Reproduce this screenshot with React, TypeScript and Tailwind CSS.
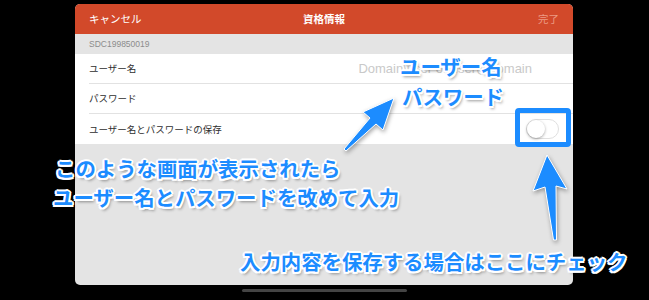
import React from 'react';

const jp = 'font-["Noto_Sans_CJK_JP","Noto_Sans",sans-serif]';

// blue callout text with white outline + soft shadow
const callout =
  'absolute whitespace-nowrap font-bold text-[20.4px] leading-none text-[#1c8cff] [text-shadow:-1.5px_-1.5px_0_#fff,1.5px_-1.5px_0_#fff,-1.5px_1.5px_0_#fff,1.5px_1.5px_0_#fff,0_2px_0_#fff,0_-2px_0_#fff,2px_0_0_#fff,-2px_0_0_#fff,2px_3px_3px_rgba(0,0,0,0.4)]';

const Row: React.FC<{ label: string; last?: boolean; children?: React.ReactNode }> = ({ label, last, children }) => (
  <div className="bg-white pl-[14px]">
    <div className={`flex h-[30px] items-center justify-between pr-[14px] ${last ? '' : 'border-b border-[#e2e2e2]'}`}>
      <span className="text-[9.5px] text-[#2e2e2e]">{label}</span>
      {children}
    </div>
  </div>
);

const App: React.FC = () => {
  return (
    <div className={`relative h-[300px] w-[649px] overflow-hidden bg-black ${jp}`}>
      {/* sheet */}
      <div className="ml-[75px] pt-[4px]">
        <div className="flex h-[281px] w-[498px] flex-col overflow-hidden rounded-[5px] bg-[#e4e4e4]">
          <div className="flex h-[30px] items-center justify-between bg-[#d2492a] px-[14px]">
            <span className="w-[60px] text-[10.5px] text-white">キャンセル</span>
            <span className="text-[10.5px] font-bold text-white">資格情報</span>
            <span className="w-[60px] text-right text-[10.5px] text-[#ec9a84]">完了</span>
          </div>
          <div className="flex h-[20px] items-center px-[14px]">
            <span className='font-["Liberation_Sans",sans-serif] text-[8.5px] text-[#8c8c8c]'>SDC199850019</span>
          </div>
          <Row label="ユーザー名">
            <span className='mr-[27px] font-["Liberation_Sans",sans-serif] text-[13px] text-[#c9c9c9]'>Domain\user or user@domain</span>
          </Row>
          <Row label="パスワード" />
          <Row label="ユーザー名とパスワードの保存" last>
            <div className="flex h-[20px] w-[33px] items-center rounded-full border border-[#e0e0e0] bg-white">
              <div className="h-[18px] w-[18px] rounded-full bg-white shadow-[0_1px_3px_rgba(0,0,0,0.35)]" />
            </div>
          </Row>
        </div>
      </div>

      {/* home indicator */}
      <div className="absolute left-[242px] top-[289px] h-[3px] w-[165px] rounded-full bg-[#444]" />

      {/* highlight around the switch */}
      <div className="absolute left-[515px] top-[108px] h-[39px] w-[56px] rounded-[4px] border-[5px] border-[#1c8cff]" />

      {/* arrows */}
      <svg className="absolute left-0 top-0 h-[300px] w-[649px] [filter:drop-shadow(1px_2px_2px_rgba(0,0,0,0.35))]" viewBox="0 0 649 300">
        <polygon
          points="344,149 370,118 363,112 394,98 383,130 376,124 346,151"
          fill="#1c8cff"
          stroke="#fff"
          strokeWidth="1"
          strokeLinejoin="round"
        />
        <polygon
          points="547,155 567,189 556,186 556.5,240 553.5,240 545,187 533,191"
          fill="#1c8cff"
          stroke="#fff"
          strokeWidth="1"
          strokeLinejoin="round"
        />
      </svg>

      <span className={`${callout} left-[400px] top-[56px]`}>ユーザー名</span>
      <span className={`${callout} left-[402px] top-[86px]`}>パスワード</span>
      <span className={`${callout} left-[55px] top-[158px]`}>このような画面が表示されたら</span>
      <span className={`${callout} left-[53px] top-[187px]`}>ユーザー名とパスワードを改めて入力</span>
      <span className={`${callout} left-[240px] top-[251px]`}>入力内容を保存する場合はここにチェック</span>
    </div>
  );
};

export default App;
